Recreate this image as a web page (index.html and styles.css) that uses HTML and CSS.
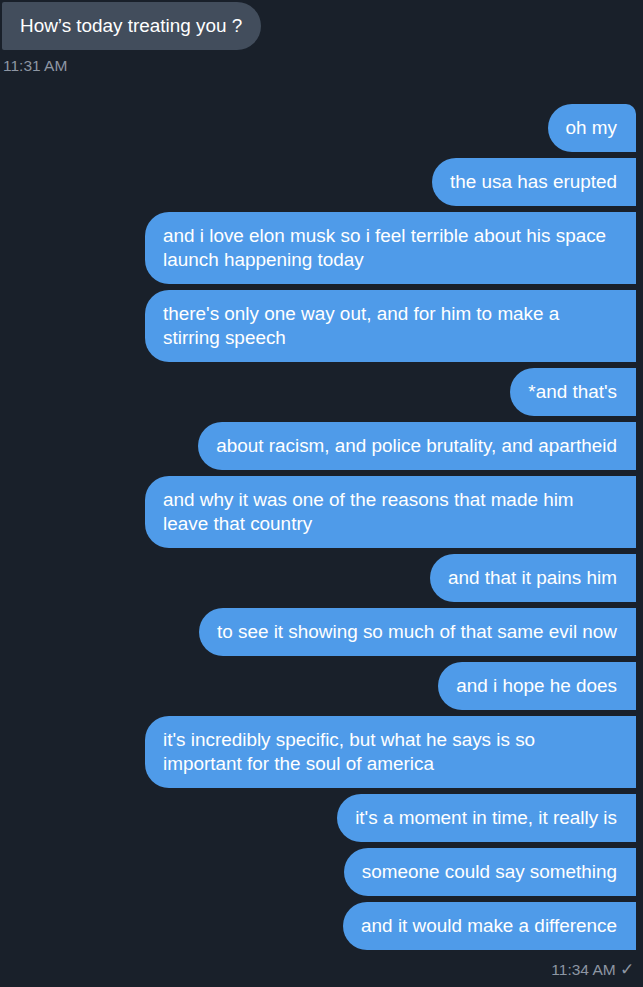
FILE: index.html
```html
<!DOCTYPE html>
<html>
<head>
<meta charset="utf-8">
<link rel="stylesheet" href="styles.css">
</head>
<body>
<div class="chat">
  <div class="group group-in">
    <div class="bubble bubble-in">How’s today treating you ?</div>
    <div class="time time-in">11:31 AM</div>
  </div>
  <div class="group group-out">
    <div class="bubble bubble-out first">oh my</div>
    <div class="bubble bubble-out">the usa has erupted</div>
    <div class="bubble bubble-out">and i love elon musk so i feel terrible about his space launch happening today</div>
    <div class="bubble bubble-out">there's only one way out, and for him to make a stirring speech</div>
    <div class="bubble bubble-out">*and that's</div>
    <div class="bubble bubble-out">about racism, and police brutality, and apartheid</div>
    <div class="bubble bubble-out">and why it was one of the reasons that made him leave that country</div>
    <div class="bubble bubble-out">and that it pains him</div>
    <div class="bubble bubble-out">to see it showing so much of that same evil now</div>
    <div class="bubble bubble-out">and i hope he does</div>
    <div class="bubble bubble-out">it's incredibly specific, but what he says is so important for the soul of america</div>
    <div class="bubble bubble-out">it's a moment in time, it really is</div>
    <div class="bubble bubble-out">someone could say something</div>
    <div class="bubble bubble-out">and it would make a difference</div>
    <div class="time time-out">11:34 AM <span class="check">✓</span></div>
  </div>
</div>
</body>
</html>
```
FILE: styles.css
```css
html, body {
  margin: 0;
  padding: 0;
  background: #19202a;
}
body {
  font-family: "Liberation Sans", Arial, sans-serif;
  color: #ffffff;
  width: 643px;
  height: 987px;
  overflow: hidden;
}
.chat {
  display: flex;
  flex-direction: column;
  padding: 2px 7px 0 2px;
}
.group {
  display: flex;
  flex-direction: column;
  gap: 6px;
}
.group-in {
  align-items: flex-start;
  gap: 0;
}
.group-out {
  align-items: flex-end;
  margin-top: 29px;
}
.bubble {
  box-sizing: border-box;
  font-size: 18.9px;
  line-height: 24px;
  padding: 12px 19px 12px 18px;
  max-width: 491px;
}
.bubble-in {
  background: #424d5c;
  border-radius: 2px 24px 24px 2px;
}
.bubble-out {
  background: #4f9be9;
  border-radius: 24px 0 0 24px;
}
.bubble-out.first {
  border-top-right-radius: 10px;
}
.time {
  font-size: 15.5px;
  line-height: 18px;
  color: #8d96a3;
}
.time-in {
  margin-top: 7px;
  padding-left: 1px;
}
.time-out {
  margin-top: 5px;
  padding-right: 2px;
}
.check {
  font-size: 17px;
}
```
